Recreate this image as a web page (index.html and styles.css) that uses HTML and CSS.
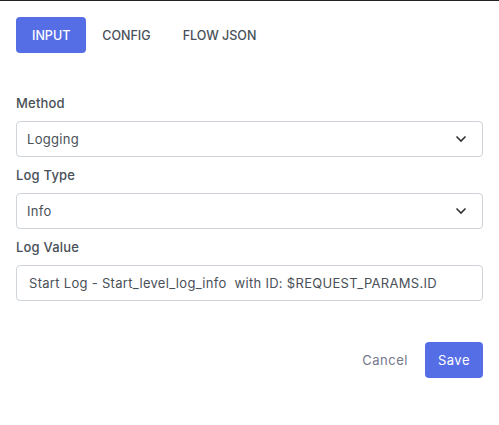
FILE: index.html
```html
<!DOCTYPE html>
<html>
<head>
<meta charset="utf-8">
<link rel="stylesheet" href="styles.css">
</head>
<body>
<div class="panel">
  <div class="tabs">
    <button class="tab active">INPUT</button>
    <button class="tab">CONFIG</button>
    <button class="tab">FLOW JSON</button>
  </div>
  <div class="form">
    <div class="field">
      <label class="label">Method</label>
      <div class="select">
        <span>Logging</span>
        <svg class="chev" width="12" height="8" viewBox="0 0 12 8"><path d="M1.5 1.5 L6 6 L10.5 1.5" fill="none" stroke="#333" stroke-width="1.6"/></svg>
      </div>
    </div>
    <div class="field">
      <label class="label">Log Type</label>
      <div class="select">
        <span>Info</span>
        <svg class="chev" width="12" height="8" viewBox="0 0 12 8"><path d="M1.5 1.5 L6 6 L10.5 1.5" fill="none" stroke="#333" stroke-width="1.6"/></svg>
      </div>
    </div>
    <div class="field">
      <label class="label">Log Value</label>
      <div class="input">Start Log - Start_level_log_info&nbsp; with ID: $REQUEST_PARAMS.ID</div>
    </div>
  </div>
  <div class="actions">
    <button class="cancel">Cancel</button>
    <button class="save">Save</button>
  </div>
</div>
</body>
</html>
```
FILE: styles.css
```css
html, body {
  margin: 0;
  padding: 0;
  background: #fff;
}
body {
  font-family: Inter, "Open Sans", sans-serif;
  color: #495057;
  border-top: 1px solid #222;
  height: 424px;
}
.panel {
  padding: 16px 16px 0 16px;
}
.tabs {
  display: flex;
}
.tab {
  font-family: inherit;
  font-size: 12.5px;
  font-weight: 500;
  color: #495057;
  background: none;
  border: none;
  height: 36px;
  padding: 0 16px;
  border-radius: 4px;
  cursor: pointer;
}
.tab.active {
  background: #556ee6;
  color: #fff;
}
.form {
  margin-top: 41px;
  display: flex;
  flex-direction: column;
  gap: 9px;
}
.field {
  display: flex;
  flex-direction: column;
}
.label {
  font-size: 13px;
  font-weight: 500;
  letter-spacing: 0.2px;
  color: #495057;
  height: 18px;
  line-height: 18px;
  margin-bottom: 9px;
}
.select, .input {
  box-sizing: border-box;
  height: 36px;
  border: 1px solid #ced4da;
  border-radius: 4px;
  display: flex;
  align-items: center;
  justify-content: space-between;
  padding: 0 15px 0 10px;
  font-size: 13px;
  letter-spacing: 0.3px;
  color: #495057;
}
.input {
  padding-left: 12px;
}
.chev {
  display: block;
}
.actions {
  margin-top: 41px;
  display: flex;
  justify-content: flex-end;
  gap: 4px;
}
.cancel, .save {
  font-family: inherit;
  font-size: 13px;
  letter-spacing: 0.5px;
  height: 36px;
  border: none;
  border-radius: 4px;
  padding: 0 13px;
  cursor: pointer;
}
.cancel {
  background: none;
  color: #74788d;
}
.save {
  background: #556ee6;
  color: #fff;
}
```
